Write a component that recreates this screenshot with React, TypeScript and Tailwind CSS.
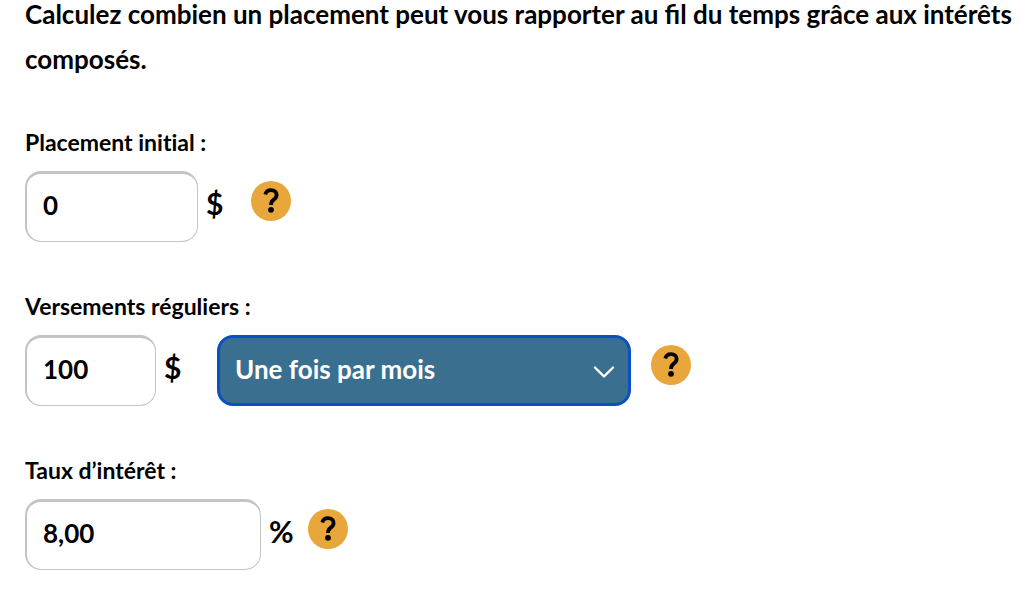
import { useState } from "react";
import type { InputHTMLAttributes } from "react";

const frequencies = [
  "Une fois par semaine",
  "Aux deux semaines",
  "Une fois par mois",
  "Une fois par année",
];

function FieldLabel({ htmlFor, text }: { htmlFor: string; text: string }) {
  return (
    <label htmlFor={htmlFor} className="block text-[23px] leading-8 [font-variant-ligatures:none]">
      {text}
    </label>
  );
}

function AmountInput({ className, ...props }: InputHTMLAttributes<HTMLInputElement>) {
  return (
    <input
      type="text"
      inputMode="decimal"
      className={`h-[71px] rounded-2xl border border-t-[3px] border-l-2 border-[#c4c4c4] bg-white px-4 pb-1.5 text-[26px] font-bold text-black ${className}`}
      {...props}
    />
  );
}

function HelpButton({ label }: { label: string }) {
  return (
    <button
      type="button"
      aria-label={label}
      className="mt-2.5 flex size-10 shrink-0 items-center justify-center rounded-full bg-[#e9a63a] text-black"
    >
      <svg viewBox="0 0 40 40" className="size-10" fill="none" aria-hidden="true">
        <path
          d="M14.3 13.4C15 10.700 17.100 9.100 20 9.100c3.400 0 5.600 1.900 5.600 4.800 0 2.500-1.300 3.700-3.100 4.900-1.800 1.200-2.500 2.400-2.500 5.200"
          stroke="currentColor"
          strokeWidth="3.800"
        />
        <circle cx="20" cy="28.800" r="2.900" fill="currentColor" />
      </svg>
    </button>
  );
}

export default function App() {
  const [initial, setInitial] = useState("0");
  const [deposit, setDeposit] = useState("100");
  const [frequency, setFrequency] = useState("Une fois par mois");
  const [rate, setRate] = useState("8,00");

  return (
    <main className="bg-white pl-[25px] font-['Lato',sans-serif] font-bold text-black">
      <p className="-mt-2 text-[26px] leading-[45px]">
        Calculez combien un placement peut vous rapporter au fil du temps grâce aux intérêts
        composés.
      </p>

      <form className="mt-11 flex flex-col gap-12">
        <div>
          <FieldLabel htmlFor="initial" text="Placement initial :" />
          <div className="mt-[13px] flex items-start">
            <AmountInput
              id="initial"
              className="w-[173px]"
              value={initial}
              onChange={(e) => setInitial(e.target.value)}
            />
            <span className="ml-2 w-[45px] text-[30px] leading-16">$</span>
            <HelpButton label="Aide : placement initial" />
          </div>
        </div>

        <div>
          <FieldLabel htmlFor="deposit" text="Versements réguliers :" />
          <div className="mt-[13px] flex items-start">
            <AmountInput
              id="deposit"
              className="w-[131px]"
              value={deposit}
              onChange={(e) => setDeposit(e.target.value)}
            />
            <span className="ml-2 w-[53px] text-[30px] leading-16">$</span>
            <div className="mr-5 grid w-[414px] items-center">
              <select
                aria-label="Fréquence des versements"
                className="col-start-1 row-start-1 h-[71px] appearance-none rounded-2xl border-3 border-[#0b50c0] bg-[#3b6f8f] px-[15px] pb-0.5 text-[26px] font-bold text-white"
                value={frequency}
                onChange={(e) => setFrequency(e.target.value)}
              >
                {frequencies.map((f) => (
                  <option key={f}>{f}</option>
                ))}
              </select>
              <svg
                viewBox="0 0 22 14"
                className="pointer-events-none col-start-1 row-start-1 mt-0.5 mr-4 h-3.5 w-[22px] justify-self-end"
                fill="none"
                stroke="white"
                strokeWidth="2.400"
                strokeLinecap="round"
                strokeLinejoin="round"
                aria-hidden="true"
              >
                <path d="M2 2.500l9 9 9-9" />
              </svg>
            </div>
            <HelpButton label="Aide : versements réguliers" />
          </div>
        </div>

        <div>
          <FieldLabel htmlFor="rate" text="Taux d’intérêt :" />
          <div className="mt-[13px] flex items-start">
            <AmountInput
              id="rate"
              className="w-[236px]"
              value={rate}
              onChange={(e) => setRate(e.target.value)}
            />
            <span className="ml-2 w-[39px] text-[30px] leading-16">%</span>
            <HelpButton label="Aide : taux d’intérêt" />
          </div>
        </div>
      </form>
    </main>
  );
}
